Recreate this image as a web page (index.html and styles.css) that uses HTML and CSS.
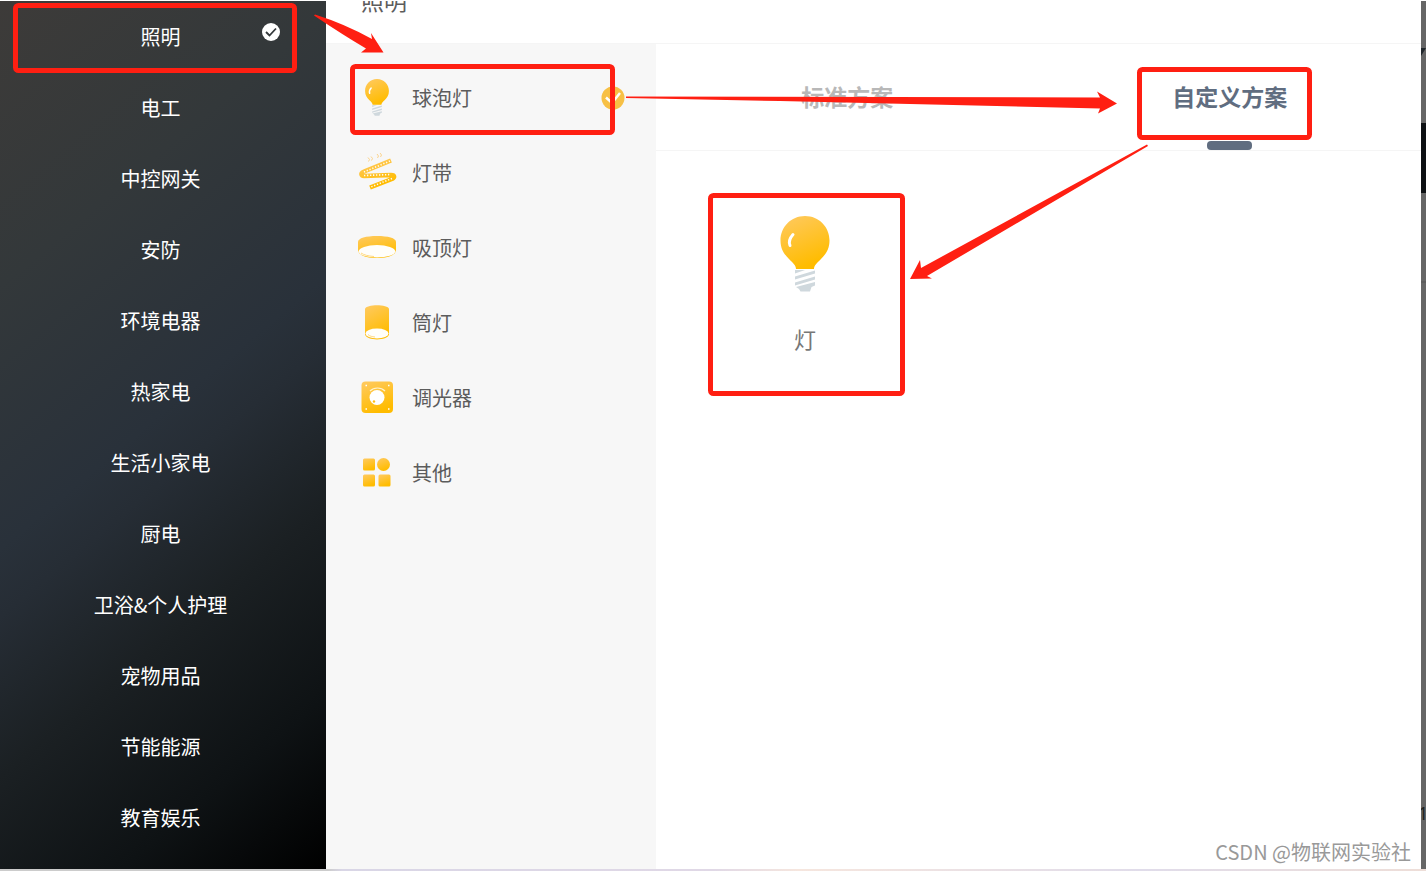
FILE: index.html
```html
<!DOCTYPE html>
<html lang="zh-CN">
<head>
<meta charset="utf-8">
<title>照明</title>
<link rel="stylesheet" href="styles.css">
</head>
<body>
<svg class="defs" width="0" height="0" aria-hidden="true">
  <defs>
    <linearGradient id="gold" x1="0" y1="0" x2="0.4" y2="1">
      <stop offset="0" stop-color="#ffca62"/>
      <stop offset="1" stop-color="#ffbc00"/>
    </linearGradient>
    <symbol id="bulb" viewBox="0 0 50 76">
      <path fill="url(#gold)" d="M25 0C11 0 .5 11 .5 24.500c0 9 4 14 8.500 18.500 4 4 7 6.500 7 10h18c0-3.500 3-6 7-10 4.500-4.500 8.500-9.500 8.500-18.500C49.500 11 39 0 25 0z"/>
      <path d="M13 18.500c-4 4.500-4.500 7.500-3 11" fill="none" stroke="#fff" stroke-width="3" stroke-linecap="round"/>
      <path fill="#cfd8dd" d="M15 54h10l-10 3.500zM15 63.500l20-6v-3l-20 6zM15 69.500l20-6v-3l-20 6zM16 71l19-5v3.500l-3.500 1.500-1.500 4.500H20.500l-1.500-2.500z"/>
    </symbol>
  </defs>
</svg>
<div class="page">
  <div class="dialog">
    <nav class="categories" aria-label="品类">
      <button class="category is-active" type="button">照明
        <svg class="category-check" viewBox="0 0 18 18" aria-hidden="true"><circle cx="9" cy="9" r="9" fill="#fff"/><path d="M4 9l3.500 3.500 6.500-7" fill="none" stroke="#34393b" stroke-width="1.800"/></svg>
      </button>
      <button class="category" type="button">电工</button>
      <button class="category" type="button">中控网关</button>
      <button class="category" type="button">安防</button>
      <button class="category" type="button">环境电器</button>
      <button class="category" type="button">热家电</button>
      <button class="category" type="button">生活小家电</button>
      <button class="category" type="button">厨电</button>
      <button class="category" type="button">卫浴&amp;个人护理</button>
      <button class="category" type="button">宠物用品</button>
      <button class="category" type="button">节能能源</button>
      <button class="category" type="button">教育娱乐</button>
    </nav>
    <main class="content">
      <header class="header"><h1 class="title">照明</h1></header>
      <div class="columns">
        <div class="products">
          <button class="product" type="button">
            <svg class="product-icon" viewBox="0 0 40 40" aria-hidden="true"><use href="#bulb" x="7" y="1" width="26" height="37"/></svg>
            <span class="product-name">球泡灯</span>
            <svg class="product-check" viewBox="0 0 24 24" aria-hidden="true"><circle cx="12" cy="12" r="11.500" fill="#f7c045"/><path d="M5 11.500l6 5.500 8-10" fill="none" stroke="#fff" stroke-width="2.500"/></svg>
          </button>
          <button class="product" type="button">
            <svg class="product-icon" viewBox="0 0 40 40" aria-hidden="true">
              <path d="M34 7.500L7 18.500c-4 1.500-3 4.500 0 4.500l27-1c4 0 4 2.500 1 4L13 34.500" fill="none" stroke="url(#gold)" stroke-width="4.500" stroke-linejoin="round"/>
              <path d="M33 8L7 19M7 22.500l27-1M35 25.500L14 34" fill="none" stroke="#fffaf0" stroke-width="1.600" stroke-dasharray="1.300 1.700"/>
              <path d="M11 4.500l1.500 2-1 2M14 3.500l1.500 2-1 2M20 1l1.500 2-1 2M23 0l1.500 2-1 2" fill="none" stroke="#fbd38d" stroke-width="1"/>
            </svg>
            <span class="product-name">灯带</span>
          </button>
          <button class="product" type="button">
            <svg class="product-icon" viewBox="0 0 40 40" aria-hidden="true">
              <path d="M1 14c0-4 8-6 19-6s19 2 19 6v8c0 5-8 8-19 8S1 27 1 22z" fill="url(#gold)"/>
              <ellipse cx="20" cy="23.300" rx="18.300" ry="6.200" fill="#fffefa"/>
              <path d="M4 25c3 2 7 3 13 3.500" fill="none" stroke="#ffd983"/>
            </svg>
            <span class="product-name">吸顶灯</span>
          </button>
          <button class="product" type="button">
            <svg class="product-icon" viewBox="0 0 40 40" aria-hidden="true">
              <path d="M8 6c1-5 23-5 24 0v25.500c-2 6.500-22 6.500-24 0z" fill="url(#gold)"/>
              <ellipse cx="20" cy="30.500" rx="11.500" ry="5" fill="#fffefa"/>
              <path d="M11 31.500c2 2 4 2 7 2.500" fill="none" stroke="#ffd983"/>
            </svg>
            <span class="product-name">筒灯</span>
          </button>
          <button class="product" type="button">
            <svg class="product-icon" viewBox="0 0 40 40" aria-hidden="true">
              <rect x="4.500" y="3.500" width="31.500" height="31.500" rx="4" fill="url(#gold)"/>
              <circle cx="20" cy="19.500" r="7.500" fill="#fff"/>
              <path d="M13 13c4-4 11-4 15 0" fill="none" stroke="#fff3d0" stroke-width="1.200"/>
              <circle cx="17" cy="23.500" r="1.200" fill="#ffbf15"/>
              <path d="M8.500 7.500h1.500M31 7.500h1.500M8.500 31h1.500M31 31h1.500" stroke="#fff" stroke-width="1.500"/>
            </svg>
            <span class="product-name">调光器</span>
          </button>
          <button class="product" type="button">
            <svg class="product-icon" viewBox="0 0 40 40" aria-hidden="true">
              <g fill="url(#gold)"><rect x="6" y="5.500" width="12" height="12" rx="1.500"/><circle cx="26.500" cy="11.500" r="6.500"/><rect x="6" y="21.500" width="12" height="12" rx="1.500"/><rect x="21.500" y="21.500" width="12" height="12" rx="1.500"/></g>
            </svg>
            <span class="product-name">其他</span>
          </button>
        </div>
        <section class="plans">
          <div class="tabs" role="tablist">
            <button class="tab" type="button" role="tab" aria-selected="false">标准方案</button>
            <button class="tab is-active" type="button" role="tab" aria-selected="true">自定义方案</button>
          </div>
          <div class="cards">
            <button class="card" type="button">
              <svg class="card-icon" viewBox="0 0 50 76" aria-hidden="true"><use href="#bulb" width="50" height="76"/></svg>
              <span>灯</span>
            </button>
          </div>
        </section>
      </div>
    </main>
    <aside class="backdrop">
      <span class="backdrop-top"><svg class="backdrop-mark" viewBox="0 0 5 8" aria-hidden="true"><path d="M0 0h5L0 8z" fill="#20262b"/></svg></span>
      <span class="backdrop-bar"></span>
      <span class="backdrop-line"></span>
      <span class="backdrop-digit">1</span>
    </aside>
  </div>
  <div class="edge"></div>
  <svg class="marks" width="1426" height="871" viewBox="0 0 1426 871" aria-hidden="true">
    <g fill="none" stroke="#ff1f12" stroke-width="5">
      <rect x="15.500" y="5.500" width="279" height="65" rx="3"/>
      <rect x="352.500" y="66.500" width="260" height="66" rx="3"/>
      <rect x="1139.500" y="69.500" width="170" height="68" rx="3"/>
      <rect x="710.500" y="195.500" width="192" height="198" rx="3"/>
    </g>
    <g fill="#ff1f12">
      <path d="M315 14.500Q345 24 372 39l-1-6 12.500 19.500H361l5-4Q343 35 314 15.500z"/>
      <path d="M626 96.500L1100 97.500l-3-6 20 12-19 10 2-5L780 101 626 98z"/>
      <path d="M1147 144.500L921 268l-1-8-10 19 22-.5-5-2.500L1148 146z"/>
    </g>
  </svg>
  <p class="watermark">CSDN @物联网实验社</p>
</div>
</body>
</html>
```
FILE: styles.css
```css
* { box-sizing: border-box; }
body { margin: 0; background: #fff; color: #5c5c5c; font-family: "Noto Sans CJK SC", sans-serif; font-size: 20px; }
button { margin: 0; padding: 0; border: 0; background: none; color: inherit; font: inherit; cursor: pointer; }
.defs { position: absolute; }
.page { position: relative; display: flex; flex-direction: column; min-height: 100vh; padding-top: 1px; overflow: hidden; }
.dialog { display: flex; flex: 1; }
.categories { display: flex; flex-direction: column; flex: 0 0 326px; padding-right: 5px; color: #fff; background: linear-gradient(140deg, #3d3b39 0%, #33383a 25%, #29313a 48%, #262d35 54%, #1b2023 68%, #0e1214 85%, #000 100%); }
.category { position: relative; height: 71px; line-height: 30px; }
.category-check { position: absolute; top: 22px; right: 41px; width: 18px; height: 18px; }
.content { display: flex; flex: 1; flex-direction: column; min-width: 0; }
.header { height: 43px; padding-left: 35px; border-bottom: 1px solid #f5f5f5; overflow: hidden; }
.title { margin: -18px 0 0; font-size: 23px; font-weight: 400; line-height: 34px; }
.columns { display: flex; flex: 1; }
.products { display: flex; flex-direction: column; flex: 0 0 330px; padding: 16px 31px 0; background: #f7f7f7; }
.product { display: flex; align-items: center; height: 75px; text-align: left; }
.product-icon { width: 40px; height: 40px; }
.product-name { flex: 1; padding-left: 15px; }
.product-check { width: 24px; height: 24px; }
.plans { flex: 1; min-width: 0; }
.tabs { display: flex; height: 107px; border-bottom: 1px solid #f5f5f5; }
.tab { position: relative; flex: 1; padding-bottom: 2px; color: #b8b8b8; font-size: 23px; font-weight: 700; }
.tab.is-active { color: #606d80; }
.tab.is-active::after { content: ""; position: absolute; bottom: 0; left: 50%; width: 45px; height: 9px; margin-left: -23px; border-radius: 4px; background: #606d80; }
.cards { padding: 44px 54px; }
.card { display: flex; flex-direction: column; align-items: center; width: 190px; padding-top: 21px; color: #777; font-size: 22px; line-height: 34px; }
.card-icon { width: 50px; height: 76px; margin-bottom: 29px; }
.backdrop { display: flex; flex: 0 0 5px; flex-direction: column; overflow: hidden; background: #666; }
.backdrop-top { height: 122px; padding-top: 47px; }
.backdrop-mark { display: block; width: 5px; height: 8px; }
.backdrop-bar { height: 70px; background: #0d1013; }
.backdrop-line { height: 2px; margin-top: 88px; background: #5c5c5c; }
.backdrop-digit { margin: auto 0 42px -3px; color: #222; font: 18px/28px "Noto Sans", sans-serif; }
.edge { height: 2px; background: linear-gradient(90deg, #ccc 0 23%, #d9d6e6 24%, #e0d8e6 50%, #f6e6de 56%, #e0dcea 80%, #eeded8 100%); }
.marks { position: absolute; top: 0; left: 0; }
.watermark { position: absolute; right: 15px; bottom: 4px; margin: 0; color: #999; line-height: 30px; }
```
